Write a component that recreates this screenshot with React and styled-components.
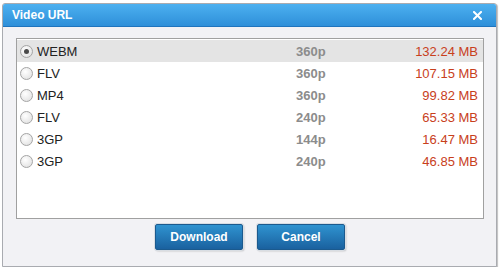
import React, { useState } from "react";
import styled, { createGlobalStyle } from "styled-components";

const GlobalStyle = createGlobalStyle`
  html, body {
    margin: 0;
    padding: 0;
    background: #ffffff;
    font-family: "Liberation Sans", Arial, sans-serif;
  }
`;

const Dialog = styled.div`
  display: flex;
  flex-direction: column;
  width: 495px;
  height: 264px;
  margin: 3px 0 0 2px;
  box-sizing: border-box;
  border: 1px solid #a9abb0;
  border-radius: 3px 3px 0 0;
  background: #f2f2f5;
  box-shadow: 1px 1px 1px rgba(0, 0, 0, 0.25);
`;

const TitleBar = styled.div`
  display: flex;
  align-items: center;
  justify-content: space-between;
  height: 22px;
  padding: 0 14px 0 9px;
  background: linear-gradient(#4cb0f0, #2e8fd9);
  border-bottom: 1px solid #1f74bd;
  border-radius: 2px 2px 0 0;
  color: #ffffff;
  font-size: 12px;
  font-weight: bold;
`;

const CloseButton = styled.svg`
  width: 9px;
  height: 9px;
  cursor: pointer;
`;

const Body = styled.div`
  flex: 1;
  display: flex;
  flex-direction: column;
  padding: 11px 12px 0 13px;
`;

const List = styled.div`
  height: 181px;
  box-sizing: border-box;
  border: 1px solid #a0a0a0;
  background: #ffffff;
  padding-top: 1px;
`;

const Row = styled.label`
  display: grid;
  grid-template-columns: 17px 1fr 82px 100px;
  align-items: center;
  height: 22px;
  padding: 0 5px 0 3px;
  background: ${(p) => (p.$selected ? "#e4e4e4" : "transparent")};
  font-size: 13px;
  cursor: pointer;
`;

const Radio = styled.span`
  width: 11px;
  height: 11px;
  border-radius: 50%;
  border: 1px solid #a5a5a5;
  background: radial-gradient(circle at 40% 35%, #ffffff, #dcdcdc);
  display: flex;
  align-items: center;
  justify-content: center;

  &::after {
    content: "";
    width: 5px;
    height: 5px;
    border-radius: 50%;
    background: ${(p) => (p.$checked ? "#4a4a4a" : "transparent")};
  }
`;

const Format = styled.span`
  color: #222222;
`;

const Resolution = styled.span`
  color: #8c8c8c;
  font-weight: bold;
`;

const Size = styled.span`
  color: #c8401c;
  text-align: right;
`;

const Footer = styled.div`
  display: flex;
  justify-content: center;
  gap: 14px;
  padding-top: 5px;
`;

const Button = styled.button`
  width: 88px;
  height: 26px;
  border: 1px solid #1b5a8e;
  border-radius: 2px;
  background: linear-gradient(#2f93d0, #1a619f);
  box-shadow: 0 0 0 1px #d8dde3, 1px 1px 2px rgba(0, 0, 0, 0.3);
  color: #ffffff;
  font-family: "Liberation Sans", Arial, sans-serif;
  font-size: 12px;
  font-weight: bold;
  cursor: pointer;
`;

const videos = [
  { format: "WEBM", res: "360p", size: "132.24 MB" },
  { format: "FLV", res: "360p", size: "107.15 MB" },
  { format: "MP4", res: "360p", size: "99.82 MB" },
  { format: "FLV", res: "240p", size: "65.33 MB" },
  { format: "3GP", res: "144p", size: "16.47 MB" },
  { format: "3GP", res: "240p", size: "46.85 MB" },
];

const App = () => {
  const [selected, setSelected] = useState(0);

  return (
    <>
      <GlobalStyle />
      <Dialog>
        <TitleBar>
          <span>Video URL</span>
          <CloseButton viewBox="0 0 9 9">
            <path d="M1 1 L8 8 M8 1 L1 8" stroke="#ffffff" strokeWidth="2" strokeLinecap="square" />
          </CloseButton>
        </TitleBar>
        <Body>
          <List>
            {videos.map((v, i) => (
              <Row key={i} $selected={i === selected} onClick={() => setSelected(i)}>
                <Radio $checked={i === selected} />
                <Format>{v.format}</Format>
                <Resolution>{v.res}</Resolution>
                <Size>{v.size}</Size>
              </Row>
            ))}
          </List>
          <Footer>
            <Button>Download</Button>
            <Button>Cancel</Button>
          </Footer>
        </Body>
      </Dialog>
    </>
  );
};

export default App;
